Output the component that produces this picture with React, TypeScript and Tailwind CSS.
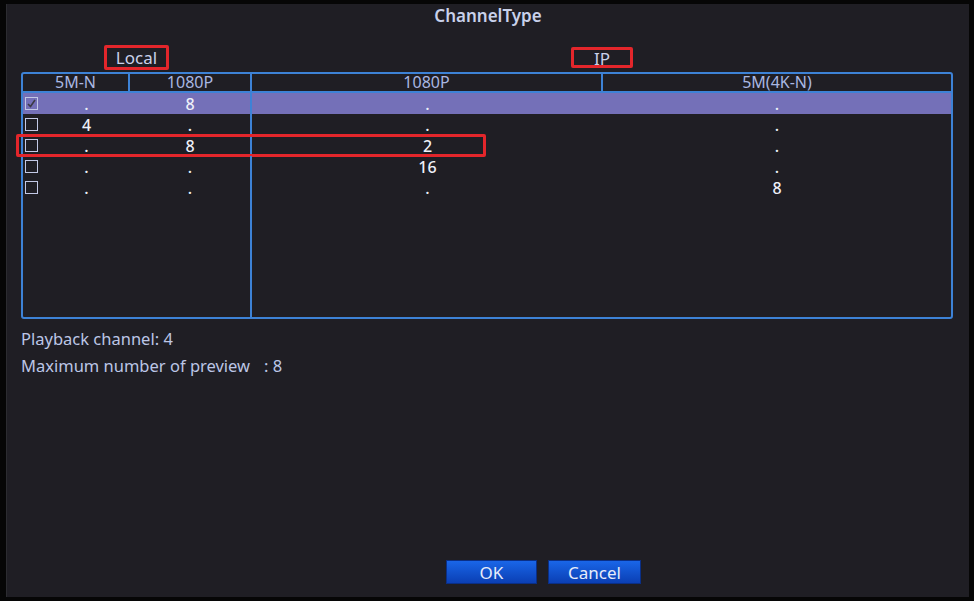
const font = { fontFamily: '"Noto Sans", "Open Sans", sans-serif' };

type Row = { checked: boolean; cells: [string, string, string, string] };

const rows: Row[] = [
  { checked: true, cells: ['.', '8', '.', '.'] },
  { checked: false, cells: ['4', '.', '.', '.'] },
  { checked: false, cells: ['.', '8', '2', '.'] },
  { checked: false, cells: ['.', '.', '16', '.'] },
  { checked: false, cells: ['.', '.', '.', '8'] },
];

function Checkbox({ checked }: { checked: boolean }) {
  return (
    <div className="w-[13px] h-[13px] border-[1.5px] border-[#c3c9e6] flex items-center justify-center">
      {checked && (
        <svg width="9" height="9" viewBox="0 0 9 9">
          <polyline points="1,5 3.5,7.5 8,1" fill="none" stroke="#3b3a44" strokeWidth="1.6" />
        </svg>
      )}
    </div>
  );
}

function TableRow({ row, selected, outlined }: { row: Row; selected: boolean; outlined: boolean }) {
  return (
    <div className={`relative flex h-[21px] items-center text-[16px] leading-[20px] font-medium text-[#eef0f8] ${selected ? 'bg-[#7470b8]' : ''}`}>
      <div className="w-[107px] h-full flex items-center pl-[2px]">
        <Checkbox checked={row.checked} />
        <span className="flex-1 text-center pl-[5px]">{row.cells[0]}</span>
      </div>
      <div className="w-[122px] h-full flex items-center justify-center border-r-2 border-[#3d82d6]">
        {row.cells[1]}
      </div>
      <div className="w-[351px] h-full flex items-center justify-center">{row.cells[2]}</div>
      <div className="flex-1 h-full flex items-center justify-center">{row.cells[3]}</div>
      {outlined && (
        <div className="absolute left-[-7px] top-[-1px] w-[470px] h-[23px] border-[3px] border-[#e3262b] rounded-[2px]" />
      )}
    </div>
  );
}

export default function App() {
  return (
    <div className="w-[974px] h-[601px] bg-[#060606] pt-[4px] pl-[6px]" style={font}>
      <div className="w-[963px] h-[593px] bg-[#1f1e24] border-l border-[#2c2c31] flex flex-col px-[14px]">
        {/* Title */}
        <div className="h-[22px] flex items-end justify-center text-[17px] font-semibold text-[#c9d1ea] leading-[20px]">
          ChannelType
        </div>

        {/* Group labels */}
        <div className="h-[46px] flex items-start pt-[19px]">
          <div className="w-[231px] flex justify-center">
            <div className="w-[65px] h-[25px] border-[3px] border-[#e3262b] rounded-[2px] flex items-center justify-center text-[17px] text-[#c9d1ea] pt-[1px]">
              Local
            </div>
          </div>
          <div className="flex-1 flex justify-center pt-[2px] pr-[3px]">
            <div className="w-[62px] h-[21px] border-[3px] border-[#e3262b] rounded-[2px] flex items-center justify-center text-[17px] text-[#c9d1ea] pt-[3px]">
              IP
            </div>
          </div>
        </div>

        {/* Table */}
        <div className="h-[247px] w-[932px] border-2 border-[#3d82d6] rounded-[3px] flex flex-col">
          <div className="flex h-[19px] border-b-2 border-[#3d82d6] text-[16px] text-[#a9b7e2] leading-[17px]">
            <div className="w-[107px] text-center border-r-2 border-[#3d82d6]">5M-N</div>
            <div className="w-[122px] text-center border-r-2 border-[#3d82d6]">1080P</div>
            <div className="w-[351px] text-center border-r-2 border-[#3d82d6]">1080P</div>
            <div className="flex-1 text-center">5M(4K-N)</div>
          </div>
          {rows.map((row, i) => (
            <TableRow key={i} row={row} selected={i === 0} outlined={i === 2} />
          ))}
          <div className="flex-1 flex">
            <div className="w-[229px] border-r-2 border-[#3d82d6]" />
          </div>
        </div>

        {/* Info */}
        <div className="mt-[6px] text-[16.5px] text-[#bcc6e6] leading-[27px]">
          <div>Playback channel: 4</div>
          <div>
            Maximum number of preview<span className="pl-[14px]">: 8</span>
          </div>
        </div>

        <div className="flex-1" />

        {/* Buttons */}
        <div className="flex gap-[11px] pl-[425px] pb-[13px]">
          <button className="w-[91px] h-[24px] bg-gradient-to-b from-[#1a66e8] to-[#0b3fb4] border border-[#0a2f86] text-[17px] text-[#e6ecfa] leading-none">
            OK
          </button>
          <button className="w-[93px] h-[24px] bg-gradient-to-b from-[#1a66e8] to-[#0b3fb4] border border-[#0a2f86] text-[17px] text-[#e6ecfa] leading-none">
            Cancel
          </button>
        </div>
      </div>
    </div>
  );
}
